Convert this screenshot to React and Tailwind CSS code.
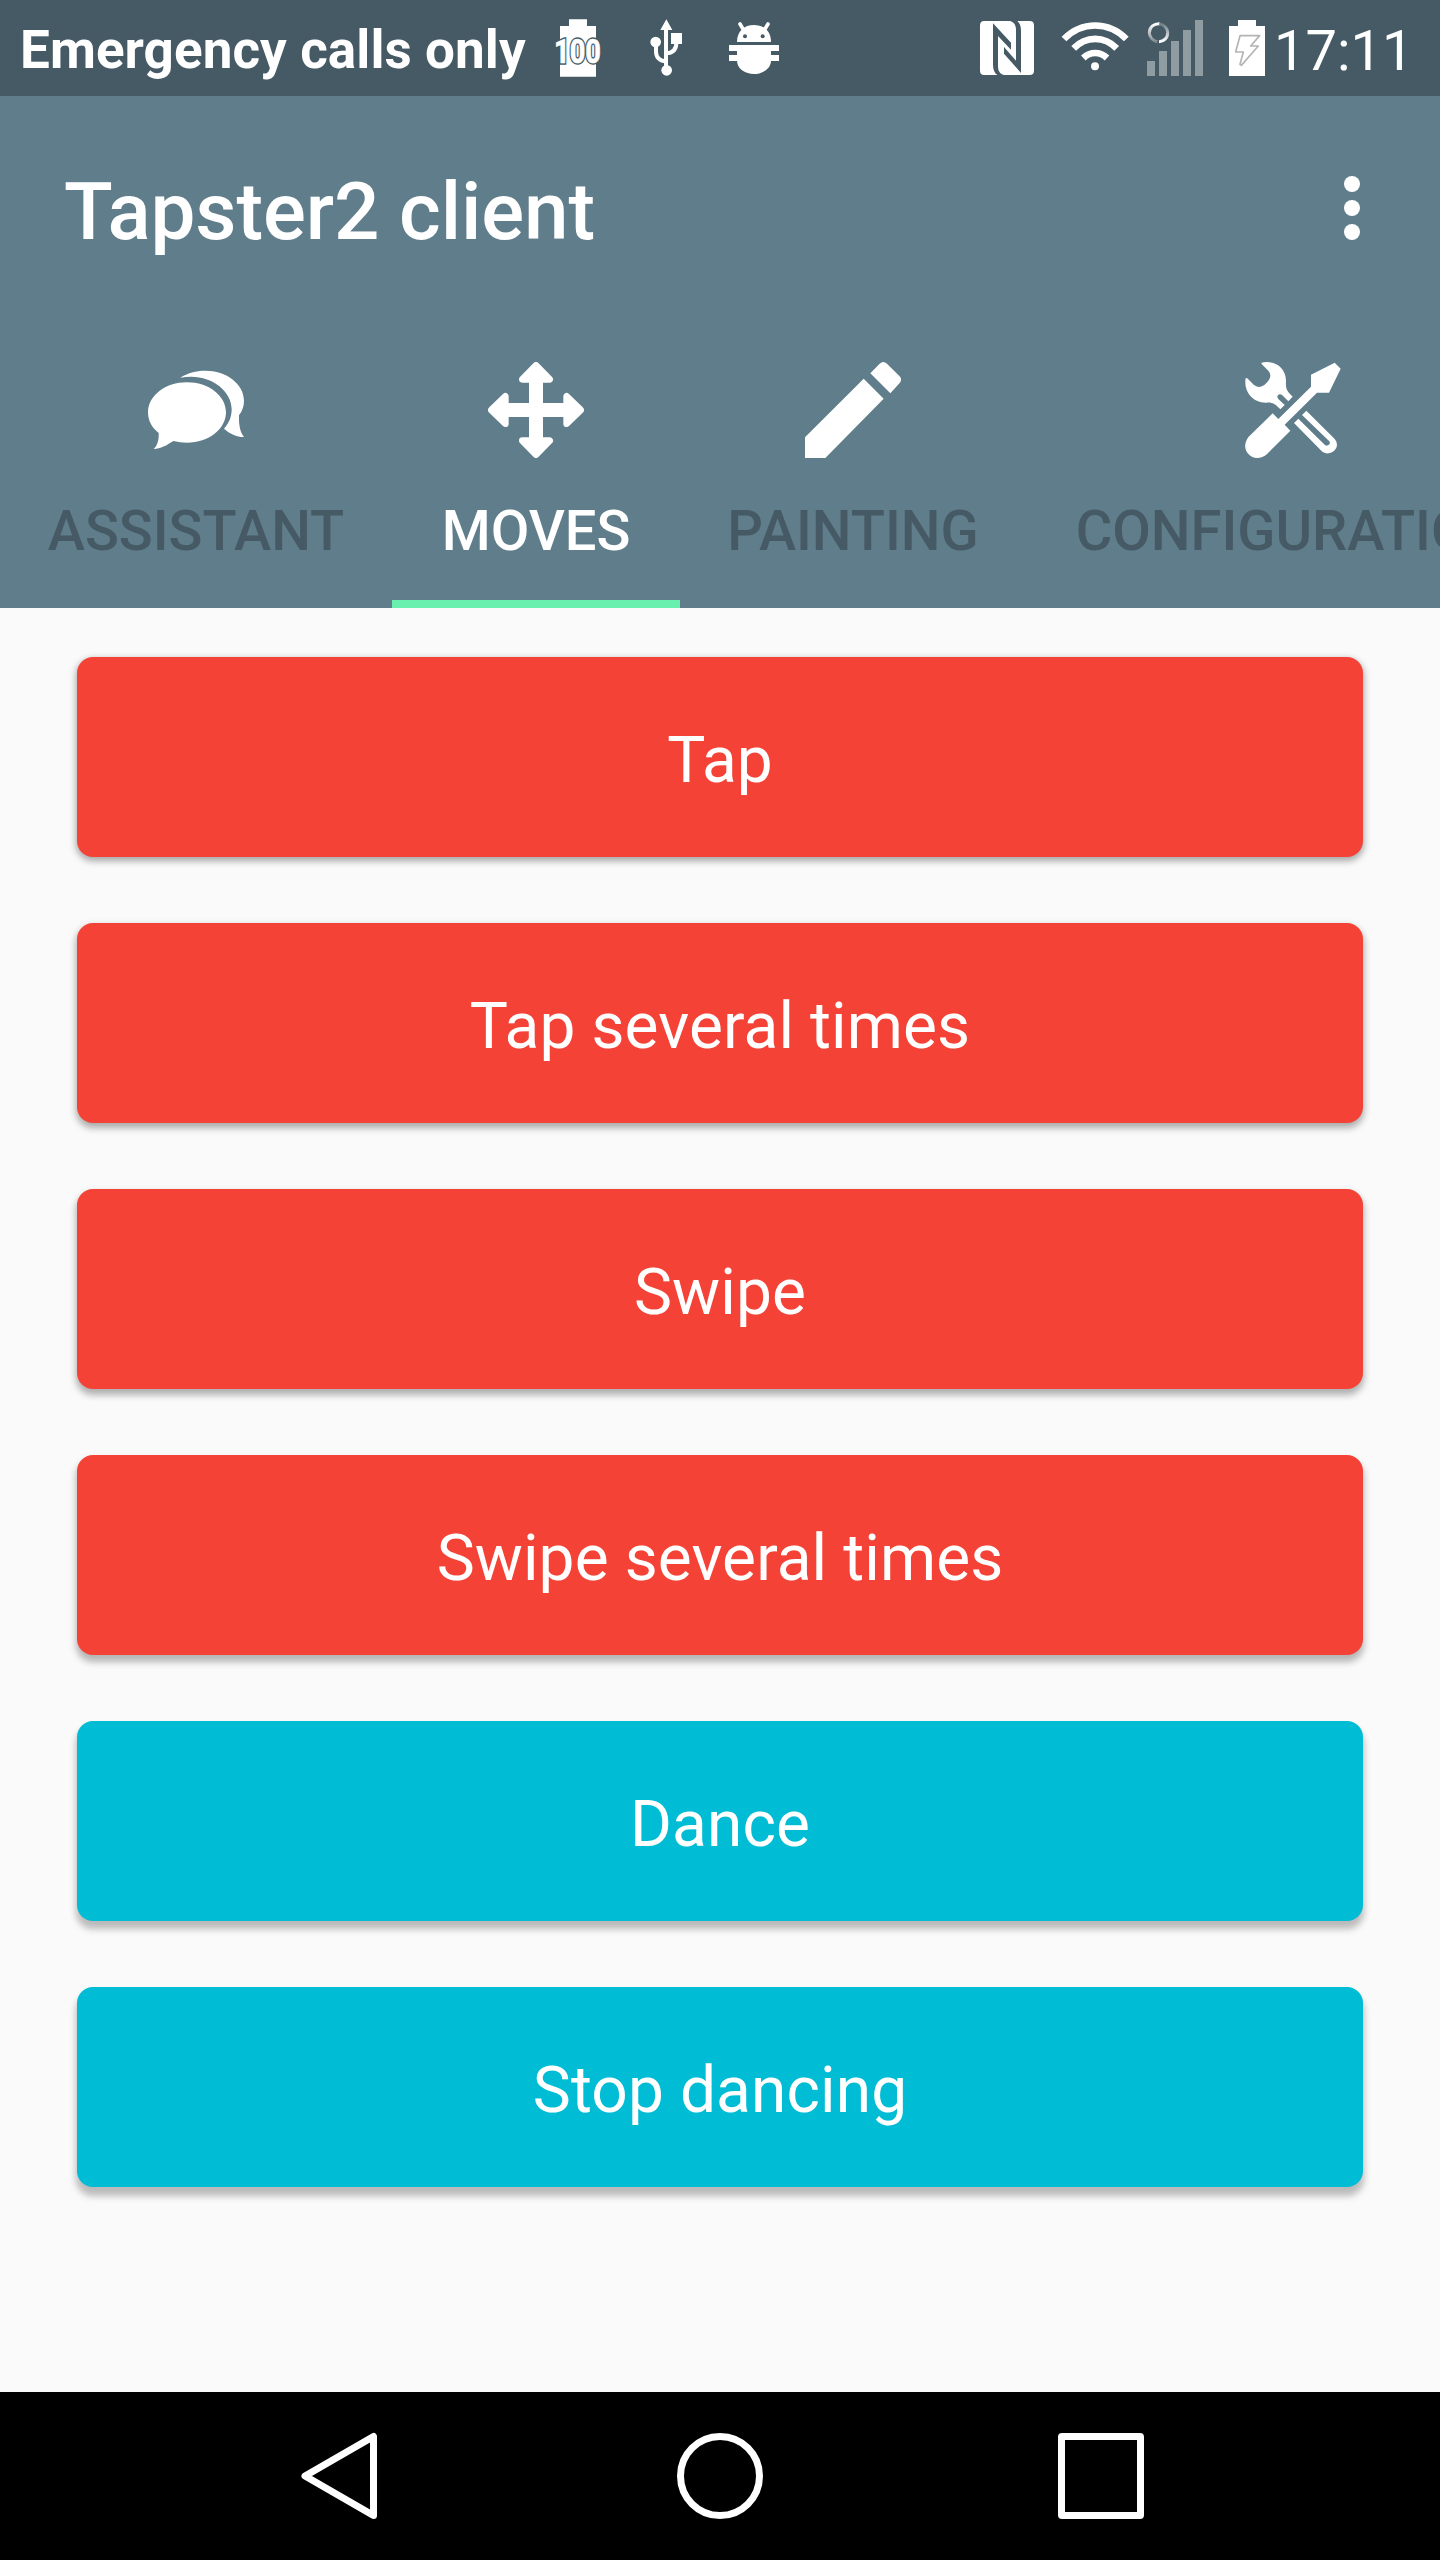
const BatteryFullIcon = () => (
  <svg className="h-[60px] w-[56px] shrink-0 overflow-visible" viewBox="60 54 168 180">
    <path d="M117 58H171V78H198V230H90V78H117Z" fill="#fff" />
    <g transform="translate(72 190) scale(0.83 1)" fontSize="98" fontWeight="800">
      <text stroke="#455a64" strokeWidth="10" fill="#455a64">
        100
      </text>
      <text fill="#fff" stroke="#fff" strokeWidth="1.5" aria-hidden="true">
        100
      </text>
    </g>
  </svg>
);

const UsbIcon = () => (
  <svg className="h-[60px] w-[34px] shrink-0" viewBox="357 54 102 180">
    <g fill="#fff">
      <path d="M409 58L427 90H391Z" />
      <circle cx="377" cy="126" r="16" />
      <rect x="423" y="99" width="33" height="33" />
      <circle cx="410" cy="211" r="16" />
    </g>
    <g fill="none" stroke="#fff" strokeWidth="12">
      <path d="M408 86V205" />
      <path d="M378 130V155C378 172 390 184 408 184" />
      <path d="M439 128C439 148 428 159 408 160" />
    </g>
  </svg>
);

const DebugIcon = () => (
  <svg className="h-[60px] w-[50px] shrink-0" viewBox="597 54 150 180">
    <path d="M630 72L642 92M714 72L702 92" stroke="#fff" strokeWidth="11" strokeLinecap="round" />
    <path d="M621 126C621 93 643 75 672 75S723 93 723 126Z" fill="#fff" />
    <circle cx="645" cy="109" r="6" fill="#455a64" />
    <circle cx="698" cy="109" r="6" fill="#455a64" />
    <path d="M597 135H747V153H723V165H747V183H723C722 207 697 222 672 222S622 207 621 183H597V165H621V153H597Z" fill="#fff" />
  </svg>
);

const NfcIcon = () => (
  <svg className="h-[54px] w-[54px] shrink-0" viewBox="60 63 162 162">
    <path
      fill="#fff"
      d="M73 63H150C162 66 168 76 168 90V182L132 141V161L183 219V94C183 79 180 71 172 63H209Q222 63 222 76V212Q222 225 209 225H132C118 221 114 211 114 198V108L153 149V128L99 70V193C99 209 103 219 112 225H73Q60 225 60 212V76Q60 63 73 63Z"
    />
  </svg>
);

const WifiIcon = () => (
  <svg className="h-[50px] w-[68px] shrink-0" viewBox="304 62 204 150">
    <g fill="none" stroke="#fff" strokeWidth="20">
      <path d="M313 116C366 62 447 62 500 116" />
      <path d="M342 144C379 106 434 106 471 144" />
      <path d="M371 173C392 153 421 153 442 173" />
    </g>
    <circle cx="406" cy="198" r="12" fill="#fff" />
  </svg>
);

const SignalIcon = () => (
  <svg className="h-[56px] w-[56px] shrink-0" viewBox="561 60 168 168">
    <defs>
      <linearGradient id="spinA" x1="0" y1="0" x2="0" y2="1">
        <stop offset="0" stopColor="#fff" />
        <stop offset="1" stopColor="#7d8b92" />
      </linearGradient>
      <linearGradient id="spinB" x1="0" y1="0" x2="0" y2="1">
        <stop offset="0" stopColor="#6b7b84" />
        <stop offset="1" stopColor="#fff" />
      </linearGradient>
    </defs>
    <path
      fill="#8f9ca2"
      d="M561 183H585V228H561ZM597 153H621V228H597ZM633 123H657V228H633ZM669 90H693V228H669ZM705 60H729V228H705Z"
    />
    <path d="M599 71C583 70 568 81 568 98C568 112 580 123 592 125" fill="none" stroke="url(#spinA)" strokeWidth="9" />
    <path d="M598 71C612 73 623 84 623 98C623 114 611 125 597 125" fill="none" stroke="url(#spinB)" strokeWidth="9" />
  </svg>
);

const ChargingIcon = () => (
  <svg className="h-[56px] w-[36px] shrink-0" viewBox="807 60 108 168">
    <path d="M834 60H888V78H915V228H807V78H834Z" fill="#fff" />
    <path
      d="M840 107H899L872 138H895L844 196L840 193L850 156H827Z"
      fill="none"
      stroke="#b4b4b4"
      strokeWidth="5"
      strokeLinejoin="round"
    />
  </svg>
);

const ChatIcon = () => (
  <svg className="size-24" viewBox="444 66 288 288">
    <g fill="#fff">
      <path d="M561 127C626 127 678 167 678 217S626 308 561 308Q540 308 520 303C500 316 482 327 461 327C473 316 477 299 476 279C455 263 444 241 444 217C444 167 496 127 561 127Z" />
      <path d="M541 113C562 99 588 92 615 92C680 92 732 132 732 182Q732 206 717 226C716 253 720 277 732 291C709 291 689 281 672 266C687 250 695 230 695 208C695 156 641 110 573 110Q556 110 541 113Z" />
    </g>
  </svg>
);

const MoveIcon = () => (
  <svg className="size-24" viewBox="324 66 288 288">
    <g fill="#fff" stroke="#fff" strokeWidth="20" strokeLinejoin="round">
      <path d="M468 76L509 118H427Z" />
      <path d="M468 344L509 302H427Z" />
      <path d="M334 210L376 169V251Z" />
      <path d="M602 210L560 169V251Z" />
    </g>
    <path d="M447 120H489V300H447ZM380 189H556V231H380Z" fill="#fff" />
  </svg>
);

const PencilIcon = () => (
  <svg className="size-24" viewBox="315 66 288 288">
    <path
      fill="#fff"
      d="M315 292L491 116L551 176L376 354H315ZM511 100L539 71Q550 61 561 71L598 108Q608 118 599 129L571 160Z"
    />
  </svg>
);

const ToolsIcon = () => (
  <svg className="size-24" viewBox="135 666 288 288">
    <g fill="#fff">
      <path d="M185 668C222 660 257 681 258 722C257 747 259 752 278 770L265 784L247 766C237 757 227 769 235 777L254 795L241 808C224 790 219 787 199 788C159 789 130 755 137 715Q139 712 144 717L162 735C177 745 188 741 199 729C212 716 215 705 205 692L187 674Q183 670 185 668Z" />
      <path d="M404 668L422 686L387 758H351L254 854L271 872L202 941C183 959 158 957 146 943C132 929 132 908 146 890L218 820L235 837L333 740V704Z" />
      <path
        fillRule="evenodd"
        d="M319 812L402 895C413 907 414 920 404 931C393 943 375 943 364 932L282 849L295 836L374 914C381 921 394 913 388 904L306 825Z"
      />
    </g>
  </svg>
);

const tabs = [
  { label: 'ASSISTANT', Icon: ChatIcon, width: 'w-[392px]' },
  { label: 'MOVES', Icon: MoveIcon, width: 'w-[288px]', active: true },
  { label: 'PAINTING', Icon: PencilIcon, width: 'w-[346px]' },
  { label: 'CONFIGURATION', Icon: ToolsIcon, width: 'w-[533px]' },
];

const RED = 'bg-[#f44336]';
const CYAN = 'bg-[#00bcd4]';

// The shadow falls further below a button the lower it sits on the screen.
const actions = [
  { label: 'Tap', color: RED, shadow: 'shadow-[0_3px_7px_1px_rgba(0,0,0,0.34)]' },
  { label: 'Tap several times', color: RED, shadow: 'shadow-[0_4px_7px_1px_rgba(0,0,0,0.32)]' },
  { label: 'Swipe', color: RED, shadow: 'shadow-[0_5px_7px_1px_rgba(0,0,0,0.30)]' },
  { label: 'Swipe several times', color: RED, shadow: 'shadow-[0_6px_7px_1px_rgba(0,0,0,0.28)]' },
  { label: 'Dance', color: CYAN, shadow: 'shadow-[0_7px_7px_1px_rgba(0,0,0,0.26)]' },
  { label: 'Stop dancing', color: CYAN, shadow: 'shadow-[0_8px_7px_1px_rgba(0,0,0,0.26)]' },
];

const StatusBar = () => (
  <div className="flex h-24 items-center bg-[#455a64] text-white">
    <span className="ml-5 w-[530px] shrink-0 pt-[4px] text-[53px] leading-none font-bold tracking-[0.08px] whitespace-nowrap">
      Emergency calls only
    </span>
    <BatteryFullIcon />
    <div className="ml-[43px] flex">
      <UsbIcon />
    </div>
    <div className="ml-[46px] flex">
      <DebugIcon />
    </div>
    <div className="ml-auto flex items-center">
      <NfcIcon />
      <div className="mr-[18px] ml-[27px] flex pb-1">
        <WifiIcon />
      </div>
      <SignalIcon />
      <div className="mr-[9px] ml-[26px] flex">
        <ChargingIcon />
      </div>
      <span className="w-[166px] pt-[5px] text-[56px] leading-none">17:11</span>
    </div>
  </div>
);

const Toolbar = () => (
  <div className="flex h-56 items-center justify-between pr-20 pl-16">
    <h1 className="pt-2 text-[80px] leading-none font-medium tracking-[-0.1px]">Tapster2 client</h1>
    <button className="flex flex-col gap-2" aria-label="More options">
      <span className="size-4 rounded-full bg-white" />
      <span className="size-4 rounded-full bg-white" />
      <span className="size-4 rounded-full bg-white" />
    </button>
  </div>
);

const TabBar = () => (
  <div className="flex h-72 overflow-hidden">
    {tabs.map(({ label, Icon, width, active }) => (
      <div
        key={label}
        className={`${width} ${active ? 'bg-linear-to-t from-[#69f0ae] from-[8px] to-transparent to-[8px] text-white' : 'text-[#455a64]'} flex shrink-0 flex-col items-center pt-[42px]`}
      >
        <Icon />
        <span className="mt-[40px] text-[56px] leading-[66px] font-medium whitespace-nowrap">{label}</span>
      </div>
    ))}
  </div>
);

const NavBar = () => (
  <div className="flex h-[168px] items-center bg-black pl-[300px]">
    <svg className="h-[88px] w-[78px]" viewBox="300 2432 78 88" fill="none" stroke="#fff" strokeWidth="7" strokeLinejoin="round">
      <path d="M373.500 2436.500V2515.500L305 2476Z" />
    </svg>
    <div className="mr-[295px] ml-[299px] size-[86px] rounded-full border-[7px] border-white" />
    <div className="size-[86px] rounded-[4px] border-[7px] border-white" />
  </div>
);

export default function App() {
  return (
    <div className="flex h-[2560px] w-[1440px] flex-col overflow-hidden bg-[#fafafa] font-[Roboto,sans-serif] text-white">
      <StatusBar />
      <header className="h-[512px] bg-[#607d8b]">
        <Toolbar />
        <TabBar />
      </header>
      <main className="flex grow flex-col gap-[66px] px-[77px] pt-[49px]">
        {actions.map(({ label, color, shadow }) => (
          <button
            key={label}
            className={`${color} ${shadow} h-[200px] rounded-[16px] pt-2 text-[64px] leading-none tracking-[0.1px]`}
          >
            {label}
          </button>
        ))}
      </main>
      <NavBar />
    </div>
  );
}
